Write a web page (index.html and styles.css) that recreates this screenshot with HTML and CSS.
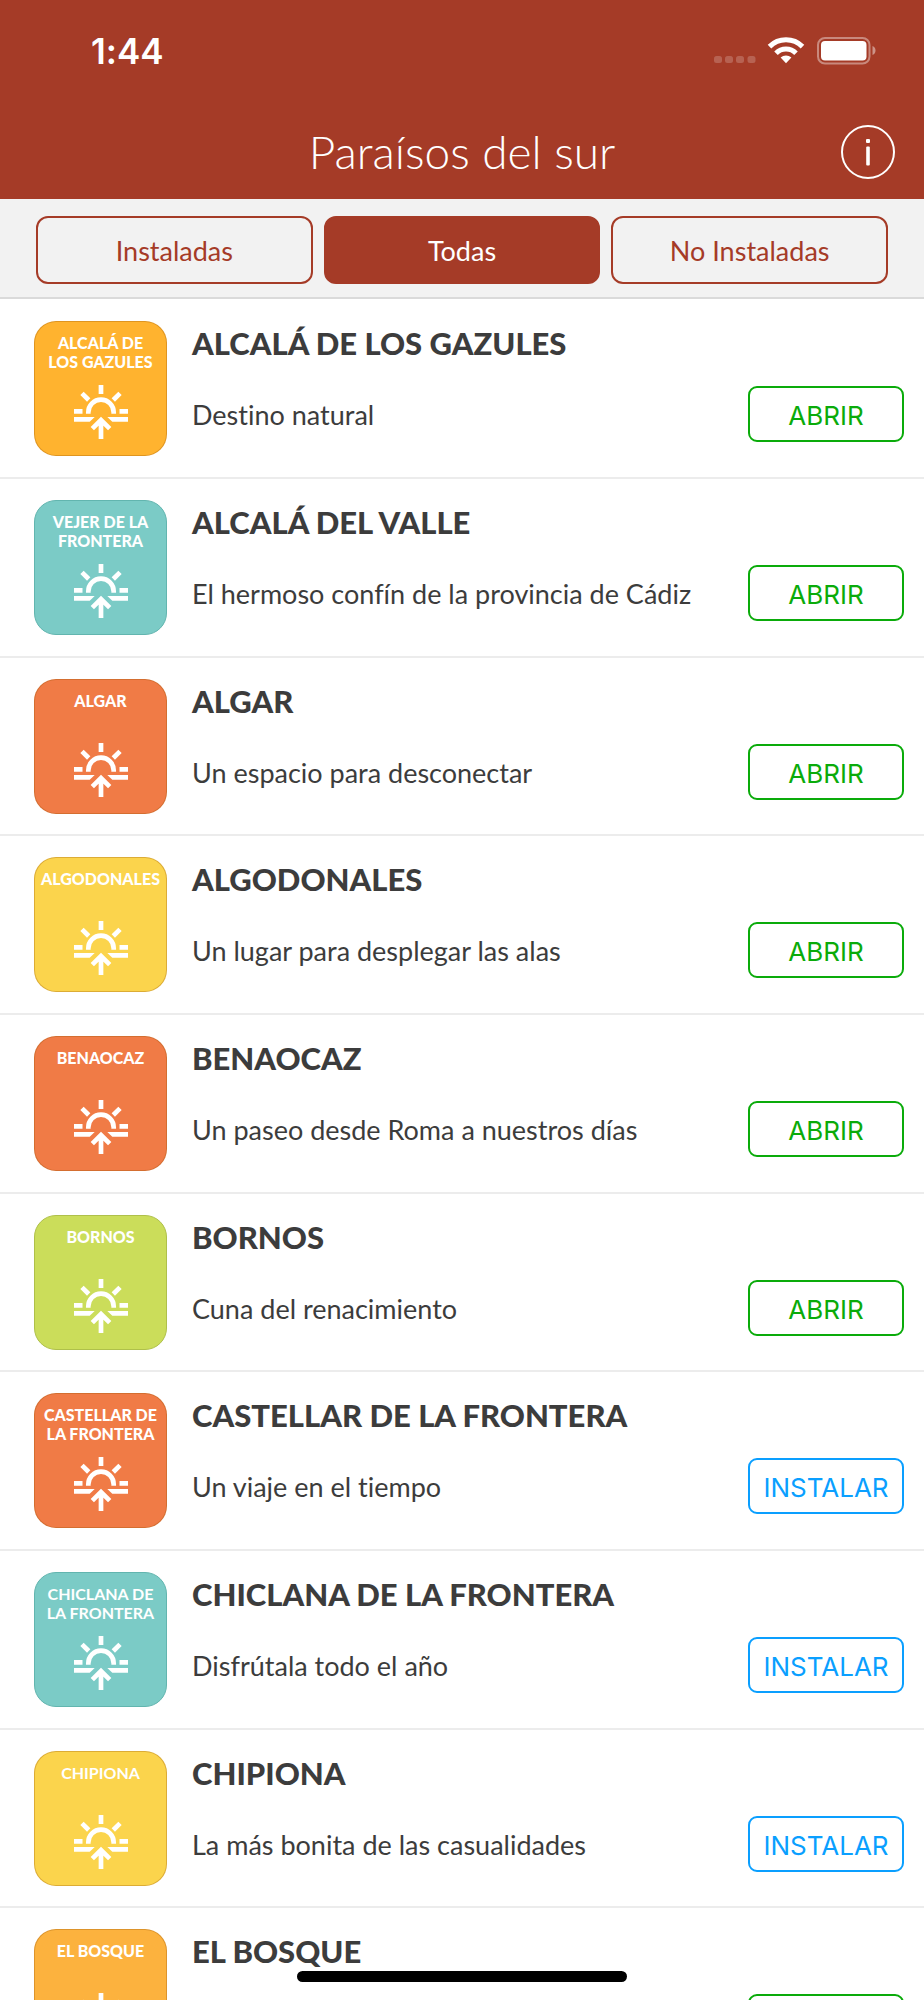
FILE: index.html
```html
<!DOCTYPE html>
<html lang="es">
<head>
<meta charset="utf-8">
<meta name="viewport" content="width=device-width, initial-scale=1">
<title>Paraísos del sur</title>
<link rel="stylesheet" href="styles.css">
</head>
<body>
<svg class="defs" aria-hidden="true">
  <symbol id="sunrise" viewBox="0 0 54 54">
    <g fill="none" stroke="#fff" stroke-width="4.7">
      <path d="M27 0v9M8 8.3l6.7 6.7M46 8.3l-6.7 6.7M0 26.4h8.5M45.5 26.4h8.5"/>
      <path d="M14.3 28.7v-1.3a12.7 12.7 0 0 1 25.4 0v1.3"/>
      <path d="M27 54V35M18.3 43.6l8.7-8.6 8.7 8.6"/>
    </g>
    <path fill="#fff" d="M0 32h20.7l-5 4.7H0zM54 32H33.3l5 4.7H54z"/>
  </symbol>
</svg>
<div class="app">
  <header class="header">
    <div class="status">
      <span class="time">1:44</span>
      <svg class="signals" width="164" height="30" viewBox="0 0 164 30" aria-hidden="true">
        <g fill="#fff" fill-opacity=".2">
          <rect x="2" y="20" width="8" height="7" rx="2.5"/><rect x="13" y="20" width="8" height="7" rx="2.5"/>
          <rect x="24" y="20" width="8" height="7" rx="2.5"/><rect x="35.5" y="20" width="8" height="7" rx="2.5"/>
        </g>
        <g fill="none" stroke="#fff" stroke-width="5">
          <path d="M57.5 10.6a23.5 23.5 0 0 1 33 0"/>
          <path d="M64 17.2a14.2 14.2 0 0 1 20 0"/>
        </g>
        <path fill="#fff" d="M68.6 21.6a8 8 0 0 1 10.8 0L74 27.2z"/>
        <rect x="106" y="2" width="51.5" height="25.5" rx="7" fill="none" stroke="#fff" stroke-opacity=".4" stroke-width="2"/>
        <rect x="109" y="5" width="45.5" height="19.5" rx="4" fill="#fff"/>
        <path fill="#fff" fill-opacity=".45" d="M160.5 10c4 1.500 4 7.500 0 9z"/>
      </svg>
    </div>
    <div class="titlebar">
      <h1 class="title">Paraísos del sur</h1>
      <button class="info" type="button" aria-label="Información">
        <svg width="54" height="54" viewBox="0 0 54 54" aria-hidden="true">
          <circle cx="27" cy="27" r="26" fill="none" stroke="#fff" stroke-width="2"/>
          <rect x="25" y="14" width="4" height="4" rx="1" fill="#fff"/>
          <rect x="25.2" y="21.5" width="3.6" height="19" rx="1" fill="#fff"/>
        </svg>
      </button>
    </div>
  </header>
  <nav class="tabs">
    <button class="tab" type="button">Instaladas</button>
    <button class="tab tab-active" type="button" aria-pressed="true">Todas</button>
    <button class="tab" type="button">No Instaladas</button>
  </nav>
  <main class="scroll">
    <ul class="list">
      <li class="row">
        <div class="tile amber"><span class="tile-name">ALCALÁ DE<br>LOS GAZULES</span><svg class="sun"><use href="#sunrise"/></svg></div>
        <div class="body"><h2 class="name">ALCALÁ DE LOS GAZULES</h2><div class="foot"><p class="desc">Destino natural</p><button class="action open" type="button">ABRIR</button></div></div>
      </li>
      <li class="row">
        <div class="tile teal"><span class="tile-name">VEJER DE LA<br>FRONTERA</span><svg class="sun"><use href="#sunrise"/></svg></div>
        <div class="body"><h2 class="name">ALCALÁ DEL VALLE</h2><div class="foot"><p class="desc">El hermoso confín de la provincia de Cádiz</p><button class="action open" type="button">ABRIR</button></div></div>
      </li>
      <li class="row">
        <div class="tile coral"><span class="tile-name">ALGAR</span><svg class="sun"><use href="#sunrise"/></svg></div>
        <div class="body"><h2 class="name">ALGAR</h2><div class="foot"><p class="desc">Un espacio para desconectar</p><button class="action open" type="button">ABRIR</button></div></div>
      </li>
      <li class="row">
        <div class="tile yellow"><span class="tile-name">ALGODONALES</span><svg class="sun"><use href="#sunrise"/></svg></div>
        <div class="body"><h2 class="name">ALGODONALES</h2><div class="foot"><p class="desc">Un lugar para desplegar las alas</p><button class="action open" type="button">ABRIR</button></div></div>
      </li>
      <li class="row">
        <div class="tile coral"><span class="tile-name">BENAOCAZ</span><svg class="sun"><use href="#sunrise"/></svg></div>
        <div class="body"><h2 class="name">BENAOCAZ</h2><div class="foot"><p class="desc">Un paseo desde Roma a nuestros días</p><button class="action open" type="button">ABRIR</button></div></div>
      </li>
      <li class="row">
        <div class="tile lime"><span class="tile-name">BORNOS</span><svg class="sun"><use href="#sunrise"/></svg></div>
        <div class="body"><h2 class="name">BORNOS</h2><div class="foot"><p class="desc">Cuna del renacimiento</p><button class="action open" type="button">ABRIR</button></div></div>
      </li>
      <li class="row">
        <div class="tile coral"><span class="tile-name">CASTELLAR DE<br>LA FRONTERA</span><svg class="sun"><use href="#sunrise"/></svg></div>
        <div class="body"><h2 class="name">CASTELLAR DE LA FRONTERA</h2><div class="foot"><p class="desc">Un viaje en el tiempo</p><button class="action install" type="button">INSTALAR</button></div></div>
      </li>
      <li class="row">
        <div class="tile teal"><span class="tile-name tile-name-medium">CHICLANA DE<br>LA FRONTERA</span><svg class="sun"><use href="#sunrise"/></svg></div>
        <div class="body"><h2 class="name">CHICLANA DE LA FRONTERA</h2><div class="foot"><p class="desc">Disfrútala todo el año</p><button class="action install" type="button">INSTALAR</button></div></div>
      </li>
      <li class="row">
        <div class="tile yellow"><span class="tile-name tile-name-medium">CHIPIONA</span><svg class="sun"><use href="#sunrise"/></svg></div>
        <div class="body"><h2 class="name">CHIPIONA</h2><div class="foot"><p class="desc">La más bonita de las casualidades</p><button class="action install" type="button">INSTALAR</button></div></div>
      </li>
      <li class="row">
        <div class="tile orange"><span class="tile-name">EL BOSQUE</span><svg class="sun"><use href="#sunrise"/></svg></div>
        <div class="body"><h2 class="name">EL BOSQUE</h2><div class="foot"><p class="desc"></p><button class="action open" type="button" aria-label="Abrir"></button></div></div>
      </li>
    </ul>
  </main>
  <div class="home-bar"></div>
</div>
</body>
</html>
```

FILE: styles.css
```css
* {
  box-sizing: border-box;
}

body {
  margin: 0;
  background: #fff;
  color: #3c3c3c;
  font-family: Lato, "Open Sans", sans-serif;
  font-variant-ligatures: none;
}

button {
  margin: 0;
  padding: 0;
  background: none;
  border: 0;
  font: inherit;
  color: inherit;
  cursor: pointer;
}

.defs {
  position: absolute;
  width: 0;
  height: 0;
}

.app {
  display: flex;
  flex-direction: column;
  height: 100vh;
  overflow: hidden;
}

/* Header */
.header {
  flex: none;
  background: #a53b27;
  color: #fff;
}

.status {
  display: flex;
  align-items: center;
  justify-content: space-between;
  height: 101px;
  padding: 0 48px 0 91px;
}

.time {
  font-family: Inter, sans-serif;
  font-size: 35px;
  font-weight: 600;
}

.titlebar {
  display: grid;
  grid-template-columns: 54px 1fr 54px;
  align-items: center;
  height: 98px;
  padding: 4px 29px 0;
}

.title {
  grid-column: 2;
  margin: 0;
  font-size: 46px;
  line-height: 60px;
  font-weight: 300;
  text-align: center;
}

.info {
  height: 54px;
}

.info svg {
  display: block;
}

/* Filter tabs */
.tabs {
  flex: none;
  display: flex;
  gap: 11px;
  padding: 17px 36px 13px;
  background: #f2f2f2;
  border-bottom: 2px solid #dadada;
}

.tab {
  flex: 1;
  height: 68px;
  border: 2px solid #a53b27;
  border-radius: 12px;
  font-size: 27px;
  color: #a53b27;
}

.tab-active {
  background: #a53b27;
  color: #fff;
}

/* Destination list */
.scroll {
  flex: 1;
  min-height: 0;
  overflow-y: auto;
  scrollbar-width: none;
}

.list {
  margin: 0;
  padding: 1px 0 0;
  list-style: none;
}

.row {
  display: flex;
  gap: 25px;
  padding: 21px 20px 21px 34px;
  border-bottom: 2px solid #ececec;
}

.row:nth-child(3n) {
  padding-bottom: 20px;
}

.tile {
  flex: none;
  display: flex;
  flex-direction: column;
  align-items: center;
  justify-content: space-between;
  width: 133px;
  height: 135px;
  padding: 11px 0 16px;
  border: 1px solid rgba(150, 80, 0, 0.3);
  border-radius: 22px;
}

.tile-name {
  font-size: 16px;
  line-height: 19px;
  font-weight: 900;
  color: #fff;
  text-align: center;
  white-space: nowrap;
}

.tile-name-medium {
  font-weight: 700;
}

.sun {
  display: block;
  width: 54px;
  height: 54px;
}

.amber {
  background: #ffb32f;
}

.orange {
  background: #fcb23e;
}

.teal {
  background: #7bcbc6;
  border-color: #62b5af;
}

.coral {
  background: #f07b46;
}

.yellow {
  background: #fbd44c;
}

.lime {
  background: #cbdd5a;
  border-color: #afc04a;
}

.body {
  flex: 1;
  min-width: 0;
}

.name {
  margin: 0;
  font-size: 31px;
  line-height: 44px;
  font-weight: 900;
}

.foot {
  display: flex;
  align-items: center;
  justify-content: space-between;
  margin-top: 21px;
}

.desc {
  margin: 0;
  padding-top: 2px;
  font-size: 27px;
  line-height: 36px;
}

.action {
  flex: none;
  width: 156px;
  height: 56px;
  padding-top: 2px;
  border: 2px solid currentColor;
  border-radius: 9px;
  font-family: Inter, sans-serif;
  font-size: 26px;
}

.open {
  color: #0aab0a;
}

.install {
  color: #0a9fff;
}

.home-bar {
  position: fixed;
  bottom: 18px;
  left: 50%;
  width: 330px;
  height: 11px;
  margin-left: -165px;
  border-radius: 6px;
  background: #000;
}
```
